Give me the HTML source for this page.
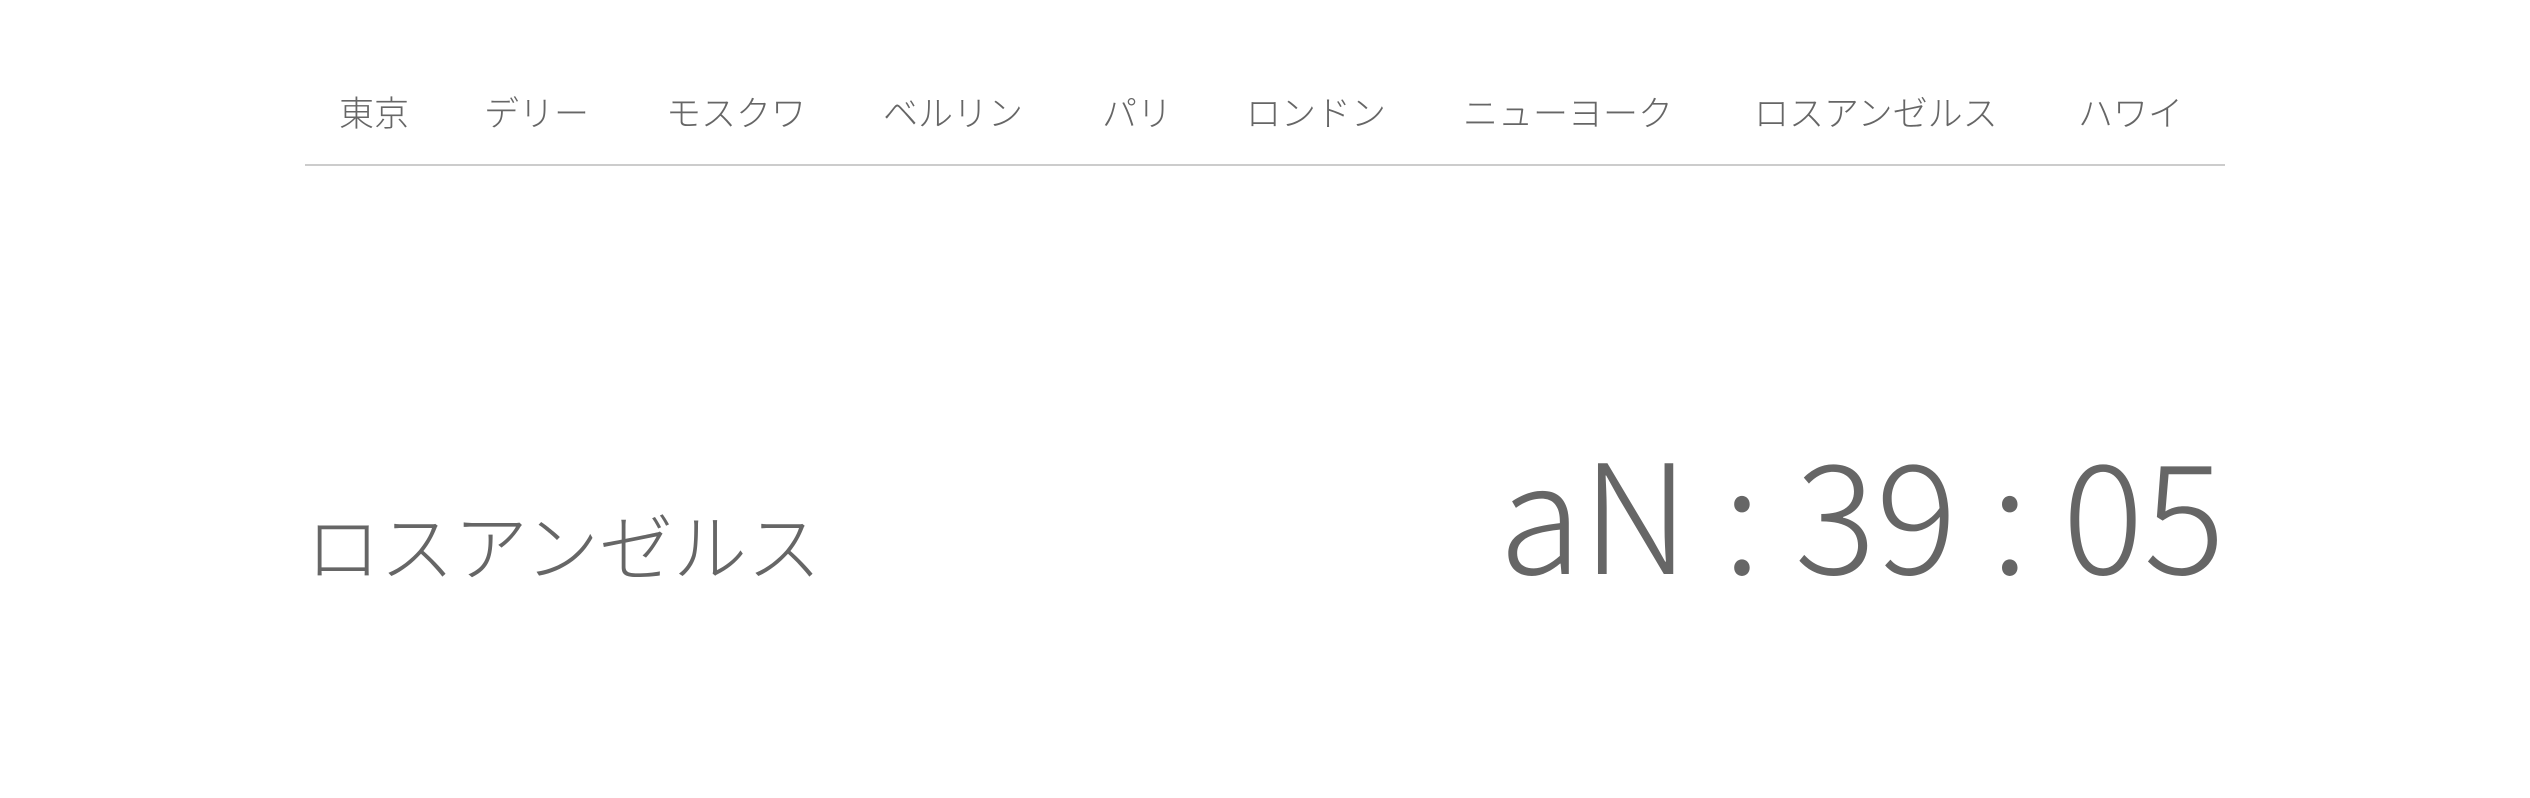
<!DOCTYPE html>
<html><head><meta charset="utf-8"><style>
html,body{margin:0;padding:0;background:#fff;width:2530px;height:798px;overflow:hidden}
body{position:relative;font-family:"Noto Sans CJK JP","Liberation Sans",sans-serif;color:#666;font-weight:300}
.n{position:absolute;top:87px;font-size:35px;line-height:50px;white-space:nowrap}
.line{position:absolute;left:305px;top:164px;width:1920px;height:2px;background:#ccc}
.city{position:absolute;left:306px;top:499px;font-size:74px;line-height:90px;white-space:nowrap;font-weight:200}
.clock{position:absolute;right:305px;top:408px;font-size:152px;line-height:200px;white-space:pre;font-weight:200}
</style></head><body>
<div class="n" style="left:339px">東京</div>
<div class="n" style="left:484px">デリー</div>
<div class="n" style="left:666px">モスクワ</div>
<div class="n" style="left:883px">ベルリン</div>
<div class="n" style="left:1102px">パリ</div>
<div class="n" style="left:1246px">ロンドン</div>
<div class="n" style="left:1463px">ニューヨーク</div>
<div class="n" style="left:1754px">ロスアンゼルス</div>
<div class="n" style="left:2078px">ハワイ</div>
<div class="line"></div>
<div class="city">ロスアンゼルス</div>
<div class="clock">aN : 39 : 05</div>
</body></html>
